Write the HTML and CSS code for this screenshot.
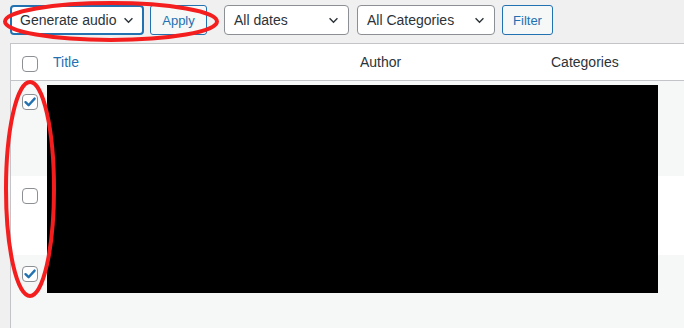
FILE: index.html
```html
<!DOCTYPE html>
<html>
<head>
<meta charset="utf-8">
<link rel="stylesheet" href="styles.css">
</head>
<body>
<div class="page">
  <div class="toolbar">
    <div class="bulk">
      <div class="select select-focus select-bulk"><span>Generate audio</span><svg class="chev" viewBox="0 0 12 8"><path d="M1.5 1.5 L6 6 L10.5 1.5" fill="none" stroke="#2c3338" stroke-width="1.6"/></svg></div>
      <button class="btn btn-apply">Apply</button>
    </div>
    <div class="filters">
      <div class="select select-dates"><span>All dates</span><svg class="chev" viewBox="0 0 12 8"><path d="M1.5 1.5 L6 6 L10.5 1.5" fill="none" stroke="#2c3338" stroke-width="1.6"/></svg></div>
      <div class="select select-cats"><span>All Categories</span><svg class="chev" viewBox="0 0 12 8"><path d="M1.5 1.5 L6 6 L10.5 1.5" fill="none" stroke="#2c3338" stroke-width="1.6"/></svg></div>
      <button class="btn btn-filter">Filter</button>
    </div>
  </div>

  <div class="table">
    <div class="row head">
      <div class="cell cb"><span class="check"></span></div>
      <div class="cell col-title"><a class="link">Title</a></div>
      <div class="cell col-author">Author</div>
      <div class="cell col-cats">Categories</div>
    </div>
    <div class="row body r1 alt">
      <div class="cell cb"><span class="check checked"><svg viewBox="0 0 16 16"><path d="M3.5 8.2 L6.6 11.2 L12.6 4.6" fill="none" stroke="#2271b1" stroke-width="2.4" stroke-linecap="round" stroke-linejoin="round"/></svg></span></div>
    </div>
    <div class="row body r2">
      <div class="cell cb"><span class="check"></span></div>
    </div>
    <div class="row body r3 alt">
      <div class="cell cb"><span class="check checked"><svg viewBox="0 0 16 16"><path d="M3.5 8.2 L6.6 11.2 L12.6 4.6" fill="none" stroke="#2271b1" stroke-width="2.4" stroke-linecap="round" stroke-linejoin="round"/></svg></span></div>
    </div>
  </div>

  <div class="redact"></div>
  <svg class="marks" viewBox="0 0 684 328" width="684" height="328">
    <ellipse cx="111" cy="21.5" rx="106" ry="18.5" fill="none" stroke="#f41e1e" stroke-width="4"/>
    <ellipse cx="30" cy="189" rx="24" ry="107" fill="none" stroke="#f41e1e" stroke-width="4"/>
  </svg>
</div>
</body>
</html>
```

FILE: styles.css
```css
* { box-sizing: border-box; }
html, body {
  margin: 0;
  padding: 0;
  background: #f0f0f1;
  overflow: hidden;
}
body {
  font-family: "Liberation Sans", Arial, sans-serif;
  font-size: 14px;
  color: #1d2327;
}
.page {
  position: relative;
  width: 684px;
  height: 328px;
  overflow: hidden;
}
.toolbar {
  display: flex;
  align-items: flex-start;
  padding: 5px 0 0 10px;
  gap: 17px;
  height: 43px;
}
.bulk, .filters {
  display: flex;
  gap: 6px;
}
.filters { gap: 8px; }
.select {
  height: 30px;
  border: 1px solid #8c8f94;
  border-radius: 4px;
  background: #fff;
  display: flex;
  align-items: center;
  justify-content: space-between;
  padding: 0 9px 0 9px;
  font-size: 14px;
  color: #2c3338;
}
.select-focus {
  border: 2px solid #2271b1;
  padding-left: 8px;
  padding-right: 8px;
}
.select-bulk { width: 134px; }
.select-dates { width: 125px; }
.select-cats { width: 138px; }
.chev { width: 11px; height: 7px; }
.btn {
  height: 30px;
  border: 1px solid #2271b1;
  border-radius: 3px;
  background: #f6f7f7;
  color: #2271b1;
  font-family: "Liberation Sans", Arial, sans-serif;
  font-size: 13px;
  padding: 0;
}
.btn-apply { width: 57px; }
.btn-filter { width: 51px; margin-left: -1px; }
.table {
  margin-left: 10px;
  width: 700px;
  border: 1px solid #c3c4c7;
  border-right: none;
  background: #fff;
}
.row {
  display: grid;
  grid-template-columns: 32px 307px 191px 1fr;
}
.head {
  height: 37px;
  border-bottom: 1px solid #c3c4c7;
  align-items: center;
}
.cell {
  padding-left: 10px;
}
.cb { padding-left: 11px; }
.body .cb { padding-top: 13px; }
.r1 { height: 95px; }
.r2 { height: 79px; }
.r2 .cb { padding-top: 12px; }
.r3 { height: 80px; }
.r3 .cb { padding-top: 11px; }
.alt { background: #f6f7f7; }
.head .cb { padding-top: 3px; }
.check {
  display: block;
  width: 16px;
  height: 16px;
  border: 1px solid #8c8f94;
  border-radius: 4px;
  background: #fff;
  position: relative;
}
.check svg {
  position: absolute;
  left: -1px;
  top: -1px;
  width: 16px;
  height: 16px;
}
.link { color: #2271b1; }
.col-author, .col-cats { color: #2c3338; }
.redact {
  position: absolute;
  left: 47px;
  top: 85px;
  width: 611px;
  height: 208px;
  background: #000;
}
.marks {
  position: absolute;
  left: 0;
  top: 0;
  pointer-events: none;
}
```
